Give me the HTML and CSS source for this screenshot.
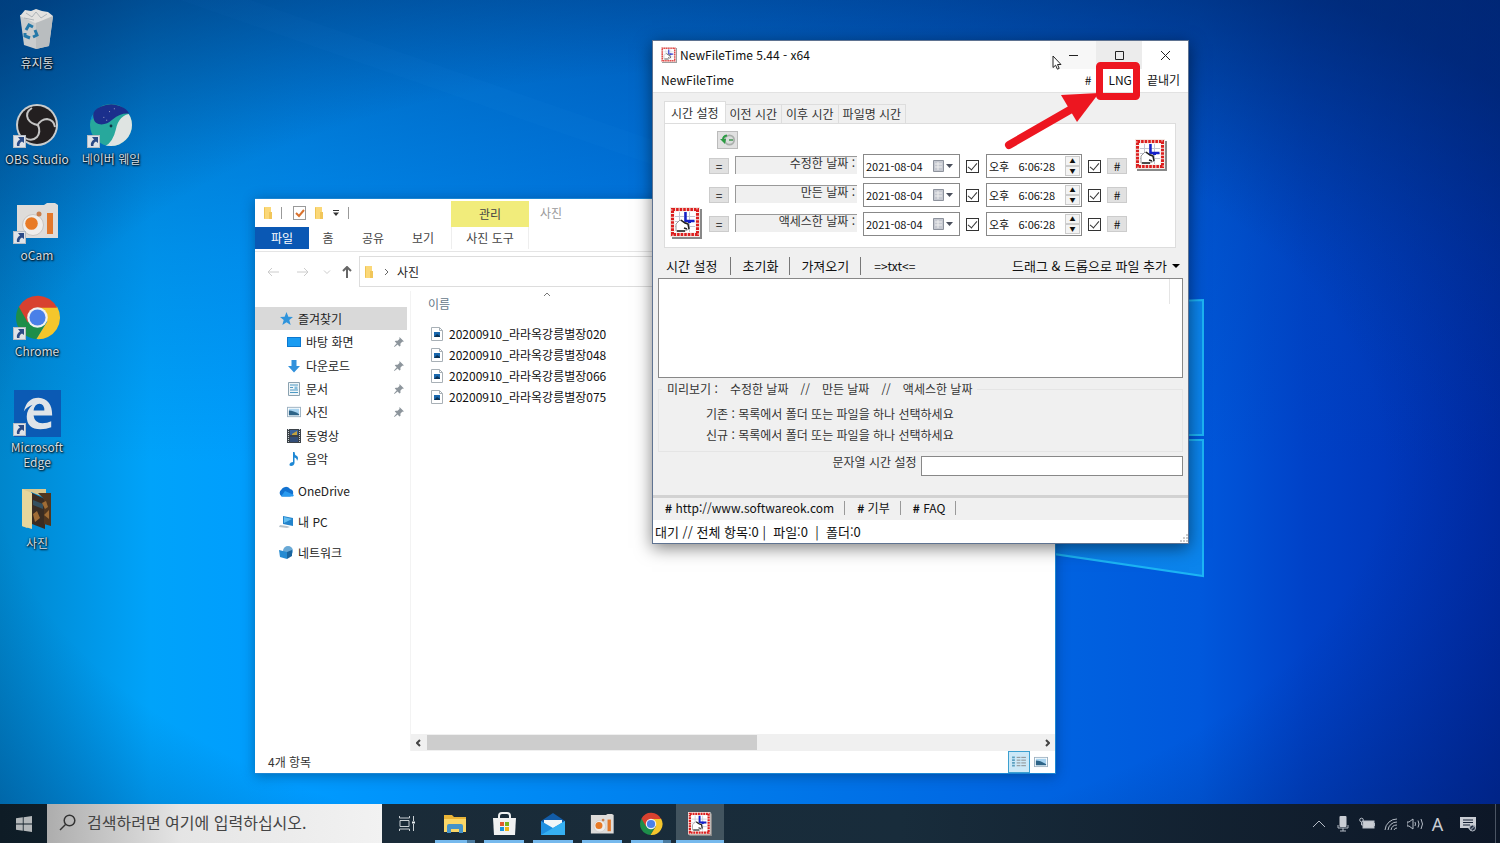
FILE: index.html
```html
<!DOCTYPE html>
<html lang="ko">
<head>
<meta charset="utf-8">
<title>NewFileTime</title>
<link rel="stylesheet" href="styles.css">
</head>
<body>
<svg class="defs" aria-hidden="true">
  <symbol id="nft" viewBox="0 0 32 32">
    <rect x="2" y="2" width="30" height="30" fill="#888"/>
    <rect width="30" height="30" fill="#f4e9e4"/>
    <rect x="2.500" y="2.500" width="25" height="25" fill="none" stroke="#dc1e1e" stroke-width="3" stroke-dasharray="2.600 .97"/>
    <rect x="4.500" y="4.500" width="21" height="21" fill="#fff"/>
    <path d="M9.500 5v20M14.500 5v20M19.500 5v20M5 9.500h20M5 14.500h20M5 19.500h20" stroke="#c3c6d2"/>
    <path d="M15.500 5v9h9" stroke="#1420c8" stroke-width="2.500" fill="none"/><path d="M18 13h3v3h-3z" fill="#1420c8"/>
    <path d="M6 17l4-4 3 2 5 1 1 6-4 2H6z" fill="#fff" stroke="#999"/>
    <path d="M11 13l4 3 3 1 1 5M7 24h8M14 21l3 1" fill="none" stroke="#222" stroke-width="1.500"/>
  </symbol>
  <symbol id="chrome" viewBox="0 0 48 48">
    <path d="M5 13A22 22 0 0 0 23 46l10-17L14 24z" fill="#1d8e4a"/>
    <path d="M24 13h20a22 22 0 0 1-21 33l11-18z" fill="#f4c62c"/>
    <path d="M5 13A22 22 0 0 1 44 14H24L14 29z" fill="#d8412f"/>
    <circle cx="24" cy="24" r="10.500" fill="#f0f0f0"/><circle cx="24" cy="24" r="8.200" fill="#4a80e8"/>
  </symbol>
  <symbol id="ocam" viewBox="0 0 42 36">
    <path d="M1 2h27l3-2h8l3 2v33H1z" fill="#dedcda"/>
    <circle cx="17" cy="22" r="10.500" fill="#efedeb" stroke="#c9c6c4"/><circle cx="15.500" cy="20.500" r="6.300" fill="#e87a26"/><circle cx="23" cy="11" r="2.500" fill="#c97e4c"/>
    <rect x="31" y="10" width="6" height="21" fill="#e2782c"/>
  </symbol>
  <symbol id="short" viewBox="0 0 13 13">
    <rect x=".5" y=".5" width="12" height="12" fill="#dfe3e8" stroke="#b5bcc4"/>
    <path d="M5 2h6v6L9 6.500Q6 8 6.500 11L4 11Q3 7 7 4.500z" fill="#2b4a86"/>
  </symbol>
  <symbol id="folder" viewBox="0 0 10 14">
    <path d="M1 1h7v5h1v7H1z" fill="#fbd878"/><path d="M1 1l1 1v11l-1-1z" fill="#efc453"/><path d="M6 6h3v7H6z" fill="#f1c65a"/>
  </symbol>
  <symbol id="photo" viewBox="0 0 12 14">
    <path d="M.5.500h8l3 3v10H.5z" fill="#fff" stroke="#a8b0b6"/><path d="M8.500.500v3h3" fill="none" stroke="#a8b0b6"/>
    <rect x="3" y="5" width="6" height="5" fill="#1a68ae"/><path d="M3 10l3-3 3 2v1z" fill="#0c3458"/>
  </symbol>
  <symbol id="pin" viewBox="0 0 11 11">
    <path d="M6 0l5 5-2 .3-2 2 .2 2.200-1.200 1L4 8.300.500 11 0 10.500 3 7 .800 5l1-1 2.200.2 2-2z" fill="#8d959c"/>
  </symbol>
  <symbol id="pic" viewBox="0 0 15 11">
    <rect x=".5" y=".5" width="14" height="10" fill="#fff" stroke="#9ab0c0"/><rect x="2" y="2" width="11" height="7" fill="#a9d4f0"/><path d="M2 4q5 0 11 4v1H2z" fill="#2e6487"/>
  </symbol>
</svg>

<div class="desktop">
  <svg class="wallpaper" viewBox="0 0 1500 843" preserveAspectRatio="none" aria-hidden="true">
    <defs>
      <linearGradient id="base"><stop offset="0" stop-color="#0086cc"/><stop offset=".1" stop-color="#00a3fa"/><stop offset=".2" stop-color="#009bff"/><stop offset=".5" stop-color="#0079ea"/><stop offset=".8" stop-color="#0058dc"/><stop offset=".87" stop-color="#0042c8"/><stop offset="1" stop-color="#002cac"/></linearGradient>
      <linearGradient id="top" x2="0" y2="1"><stop offset="0" stop-color="#003a80" stop-opacity=".5"/><stop offset=".3" stop-color="#0046a0" stop-opacity=".2"/><stop offset=".55" stop-color="#0046a0" stop-opacity="0"/></linearGradient>
      <radialGradient id="vig" cx=".46" cy=".55" r=".7"><stop offset=".66" stop-color="#001850" stop-opacity="0"/><stop offset="1" stop-color="#001850" stop-opacity=".45"/></radialGradient>
      <linearGradient id="pane"><stop offset="0" stop-color="#0a7ce8"/><stop offset="1" stop-color="#0b84ec"/></linearGradient>
    </defs>
    <rect width="1500" height="843" fill="url(#base)"/>
    <rect width="1500" height="843" fill="url(#top)"/>
    <path d="M250 0L653 140v25L180 0z" fill="#1b8ee8" opacity=".08"/>
    <path d="M1000 308l203-8v135h-203zM1000 440h203v136l-203-30z" fill="url(#pane)" stroke="#1cb4f4" stroke-width="2"/>
    <rect width="1500" height="843" fill="url(#vig)"/>
  </svg>

  <nav class="icons" aria-label="바탕 화면">
    <a class="icon" href="#bin">
      <svg class="pict" viewBox="0 0 42 42"><path d="M4 7l33 1-4 30-13 3-12-4z" fill="#c9cccd"/><path d="M4 8l5-6 6 1 5-2 6 2 6 1 5 4-6 4-12 3z" fill="#e2e1df"/><path d="M20 15l17-7-4 30-13 3z" fill="#b9bdbf"/><path d="M10 5l6 4 4-5 5 6 6-4M8 10l10 2" stroke="#aeb4b8" fill="none"/><g fill="none" stroke="#2478a8" stroke-width="3"><path d="M10 22l3-5 4 2"/><path d="M19 22l2 5-4 2"/><path d="M14 30l-5-2 0-3"/></g></svg>
      <span>휴지통</span></a>
    <span class="icon"></span>
    <a class="icon" href="#obs">
      <svg class="pict" viewBox="0 0 42 42"><circle cx="21" cy="21" r="21" fill="#c9cdce"/><circle cx="21" cy="21" r="19" fill="#231f20"/><g fill="none" stroke="#c4c4c4" stroke-width="2"><path d="M16 4q-7 4-4 11 3 5 10 6"/><path d="M21 22q4-7 10-7 7 1 8 8"/><path d="M22 21q3 7-1 12-5 5-12 1"/></g></svg>
      <svg class="short"><use href="#short"/></svg><span>OBS Studio</span></a>
    <a class="icon" href="#whale">
      <svg class="pict" viewBox="0 0 44 44"><defs><clipPath id="wc"><circle cx="22" cy="22" r="22"/></clipPath></defs><g clip-path="url(#wc)"><rect width="44" height="44" fill="#27a89c"/><path d="M16 44q8-4 11-17 3-16 17-17v34z" fill="#dfe4e2"/><path d="M0 0h12Q1 6 3 15L0 18z" fill="#0789d5"/></g><path d="M4 16Q1 7 11 3q10-5 20-1 8 3 10 8-9-1-17 6-8 7-15 5-4-1-5-5z" fill="#1b2f8c"/><circle cx="22" cy="23" r="1.500" fill="#134"/><path d="M14 14h1M20 8h1M25 5h1M17 17h1" stroke="#aac"/></svg>
      <svg class="short"><use href="#short"/></svg><span>네이버 웨일</span></a>
    <a class="icon" href="#ocam-app"><svg class="pict"><use href="#ocam"/></svg><svg class="short"><use href="#short"/></svg><span>oCam</span></a>
    <span class="icon"></span>
    <a class="icon" href="#chrome-app"><svg class="pict wide"><use href="#chrome"/></svg><svg class="short"><use href="#short"/></svg><span>Chrome</span></a>
    <span class="icon"></span>
    <a class="icon" href="#edge">
      <svg class="pict wide" viewBox="0 0 48 48"><rect width="48" height="48" fill="#0b5ab4"/><path d="M10 22Q13 8 25 8q14 1 14 18H20q1 8 9 8 5 0 9-2v6q-5 2-11 2-14 0-14-13 0-7 6-12-6 2-9 7zM20 21h11q0-7-5-7t-6 7z" fill="#dfe4e8"/></svg>
      <svg class="short"><use href="#short"/></svg><span>Microsoft Edge</span></a>
    <span class="icon"></span>
    <a class="icon" href="#photos">
      <svg class="pict" viewBox="0 0 42 42"><path d="M6 1h24v9l-15-6v32l-4 4-5-2z" fill="#d9c88f"/><path d="M6 1l10 4v36L6 38z" fill="#e6d69c"/><path d="M16 5l13 6v30l-13-5z" fill="#3a2c22"/><path d="M22 5h13v33l-7-2V11z" fill="#50361f"/><path d="M17 12l10 4v5l-10-4z" fill="#345060"/><path d="M17 26l4-3 3 7-5 4zM26 15l4-2 2 6-3 2zM28 27l5-5v9z" fill="#a06c35"/></svg>
      <span>사진</span></a>
  </nav>

  <section class="win explorer" aria-label="사진">
    <header class="qat">
      <svg class="f"><use href="#folder"/></svg><i class="bar"></i>
      <svg class="chk" viewBox="0 0 13 14"><rect x=".5" y=".5" width="12" height="13" fill="#fff" stroke="#999"/><path d="M3 7l3 3 5-6" stroke="#d9722e" stroke-width="2" fill="none"/></svg>
      <svg class="f"><use href="#folder"/></svg>
      <svg class="dd" viewBox="0 0 6 6"><path d="M0 .500h6" stroke="#333"/><path d="M0 2.500h6L3 6z" fill="#333"/></svg><i class="bar"></i>
      <button class="manage">관리</button><span class="wtitle">사진</span>
    </header>
    <div class="ribbon"><button class="file">파일</button><button>홈</button><button>공유</button><button>보기</button><button class="tools">사진 도구</button></div>
    <div class="addr">
      <button class="dim" aria-label="뒤로"><svg viewBox="0 0 12 10"><path d="M5 1L1 5l4 4M1 5h11"/></svg></button>
      <button class="dim" aria-label="앞으로"><svg viewBox="0 0 12 10"><path d="M7 1l4 4-4 4M0 5h11"/></svg></button>
      <button class="dim small" aria-label="최근 위치"><svg viewBox="0 0 12 10"><path d="M3 3.500l3 3 3-3"/></svg></button>
      <button class="up" aria-label="위로"><svg viewBox="0 0 10 12"><path d="M1 5l4-4 4 4M5 1v11"/></svg></button>
      <div class="path"><svg class="f"><use href="#folder"/></svg><svg class="gt" viewBox="0 0 5 8"><path d="M1 1l3 3-3 3"/></svg><span>사진</span></div>
    </div>
    <div class="content">
      <nav class="tree">
        <ul>
          <li class="sel"><a href="#q"><svg viewBox="0 0 14 14"><path d="M7 0l2 5 5 .3-4 3.400 1.500 5.300L7 11l-4.500 3L4 8.700 0 5.300 5 5z" fill="#2f94dc"/></svg>즐겨찾기</a></li>
          <li class="sub"><a href="#d"><svg viewBox="0 0 14 14"><rect y="2" width="14" height="10" fill="#0c78cf"/><rect x="1" y="3" width="12" height="8" fill="#1a9cf2"/></svg>바탕 화면</a><svg class="pin"><use href="#pin"/></svg></li>
          <li class="sub"><a href="#dl"><svg viewBox="0 0 14 14"><path d="M4.500 1h5v6H13l-6 6.500L1 7h3.500z" fill="#3191dc"/></svg>다운로드</a><svg class="pin"><use href="#pin"/></svg></li>
          <li class="sub"><a href="#doc"><svg viewBox="0 0 14 14"><path d="M1.500.500h11v13h-11z" fill="#eff5f8" stroke="#8ba2b0"/><path d="M3 3h8M3 5.500h3M3 8h8M3 10.500h8" stroke="#4e9ac4"/><path d="M7.500 4.500h3v3h-3z" fill="#83bcdc"/></svg>문서</a><svg class="pin"><use href="#pin"/></svg></li>
          <li class="sub"><a href="#p"><svg><use href="#pic"/></svg>사진</a><svg class="pin"><use href="#pin"/></svg></li>
          <li class="sub"><a href="#v"><svg viewBox="0 0 14 14"><rect width="14" height="14" fill="#3c4248"/><path d="M1.500 0v14M12.500 0v14" stroke="#c9d0d4" stroke-dasharray="1 1"/><path d="M3 1h8v5H3z" fill="#39629b"/><path d="M5 5l5-3v4H5z" fill="#c5a33d"/><path d="M3 8h8v5H3z" fill="#324e79"/></svg>동영상</a></li>
          <li class="sub"><a href="#m"><svg viewBox="0 0 14 14"><path d="M6 0h1.500q0 3 2.500 4 2 2 0 5 0-3-2.500-3.500V11q-.5 3-3.500 3-2 0-1.500-2 1-2 3.500-2z" fill="#1d87d4"/></svg>음악</a></li>
        </ul>
        <ul class="roots">
          <li><a href="#od"><svg class="big" viewBox="0 0 16 12"><path d="M4 11.500a4 4 0 0 1-.5-7A5 5 0 0 1 12 4a3.800 3.800 0 0 1 0 7.500z" fill="#1272d0"/><path d="M3 11.500L7 6l9 4-1 1.500z" fill="#2a9bf0"/></svg>OneDrive</a></li>
          <li><a href="#pc"><svg class="big" viewBox="0 0 16 14"><path d="M5 1l10 2v8L5 9z" fill="#2383cb"/><path d="M6 2l8 2-8 4z" fill="#62bdf0"/><path d="M2 10l7 1 3 1-3 1-8-1z" fill="#b7c2ca"/></svg>내 PC</a></li>
          <li><a href="#n"><svg class="big" viewBox="0 0 16 14"><circle cx="10" cy="5" r="5" fill="#69a9d6"/><path d="M1 4l8 2v7L2 11z" fill="#268bd2"/><path d="M9 6l5-2v6l-5 3z" fill="#1a659f"/></svg>네트워크</a></li>
        </ul>
      </nav>
      <div class="files">
        <div class="fhead"><button>이름</button><svg class="sort" viewBox="0 0 8 5"><path d="M1 4l3-3 3 3" fill="none" stroke="#777"/></svg></div>
        <ul>
          <li><svg><use href="#photo"/></svg>20200910_라라옥강릉별장020</li>
          <li><svg><use href="#photo"/></svg>20200910_라라옥강릉별장048</li>
          <li><svg><use href="#photo"/></svg>20200910_라라옥강릉별장066</li>
          <li><svg><use href="#photo"/></svg>20200910_라라옥강릉별장075</li>
        </ul>
        <div class="hscroll"><svg viewBox="0 0 5 8"><path d="M4 1L1 4l3 3"/></svg><div class="track"><div class="thumb"></div></div><svg viewBox="0 0 5 8"><path d="M1 1l3 3-3 3"/></svg></div>
      </div>
    </div>
    <footer class="estatus"><span>4개 항목</span>
      <button class="on" aria-label="자세히"><svg viewBox="0 0 15 13"><path d="M0 1.500h3M0 4.500h3M0 7.500h3M0 10.500h3" stroke="#5b9fbf" stroke-width="2"/><path d="M5 1.500h4M5 4.500h4M5 7.500h4M5 10.500h4M10 1.500h5M10 4.500h5M10 7.500h5M10 10.500h5" stroke="#888"/></svg></button>
      <button aria-label="큰 아이콘"><svg viewBox="0 0 15 11"><use href="#pic"/></svg></button></footer>
  </section>

  <section class="win app" aria-label="NewFileTime">
    <header class="title"><svg class="logo"><use href="#nft"/></svg><h1>NewFileTime 5.44 - x64</h1>
      <button class="min" aria-label="최소화"><svg viewBox="0 0 11 11"><path d="M1 5.500h9"/></svg></button>
      <button class="max" aria-label="최대화"><svg viewBox="0 0 11 11"><path d="M1.500 1.500h8v8h-8z"/></svg></button>
      <button aria-label="닫기"><svg viewBox="0 0 11 11"><path d="M1 1l9 9M10 1l-9 9"/></svg></button>
    </header>
    <nav class="menu"><button>NewFileTime</button><button class="hash">#</button><button>LNG</button><button>끝내기</button></nav>
    <div class="body">
      <div class="tabs" role="tablist"><button class="active" role="tab">시간 설정</button><button role="tab">이전 시간</button><button role="tab">이후 시간</button><button role="tab">파일명 시간</button></div>
      <div class="panel">
        <svg class="logo left"><use href="#nft"/></svg>
        <div class="form">
          <button class="now" aria-label="현재 시간"><svg viewBox="0 0 16 12"><circle cx="9.500" cy="6" r="5.500" fill="#a9aeab"/><circle cx="9.500" cy="6" r="3.800" fill="#d8dcda"/><path d="M7 1.500Q3 2 3 6" stroke="#2b9c43" stroke-width="2" fill="none"/><path d="M0 5h6l-1 5z" fill="#2b9c43"/><path d="M9 6h4" stroke="#6aa874" stroke-width="2"/></svg></button>
          <div class="row"><button class="sq">=</button><label for="d1">수정한 날짜 :</label><div class="date"><input id="d1" value="2021-08-04"><svg viewBox="0 0 21 13"><path d="M.5.500h10v11h-10z" fill="#c5c8d0" stroke="#8d929c"/><path d="M2 4h7M2 7h7M5 2v8" stroke="#eee"/><path d="M13 4h7l-3.500 4z" fill="#4a4f5c"/></svg></div><input class="cb" type="checkbox" checked aria-label="날짜"><div class="time"><input value="오후   6:06:28" aria-label="시간"><span class="spin"><button aria-label="위">▲</button><button aria-label="아래">▼</button></span></div><input class="cb" type="checkbox" checked aria-label="시간"><button class="sq">#</button></div>
          <div class="row"><button class="sq">=</button><label for="d2">만든 날짜 :</label><div class="date"><input id="d2" value="2021-08-04"><svg viewBox="0 0 21 13"><path d="M.5.500h10v11h-10z" fill="#c5c8d0" stroke="#8d929c"/><path d="M2 4h7M2 7h7M5 2v8" stroke="#eee"/><path d="M13 4h7l-3.500 4z" fill="#4a4f5c"/></svg></div><input class="cb" type="checkbox" checked aria-label="날짜"><div class="time"><input value="오후   6:06:28" aria-label="시간"><span class="spin"><button aria-label="위">▲</button><button aria-label="아래">▼</button></span></div><input class="cb" type="checkbox" checked aria-label="시간"><button class="sq">#</button></div>
          <div class="row"><button class="sq">=</button><label for="d3">액세스한 날짜 :</label><div class="date"><input id="d3" value="2021-08-04"><svg viewBox="0 0 21 13"><path d="M.5.500h10v11h-10z" fill="#c5c8d0" stroke="#8d929c"/><path d="M2 4h7M2 7h7M5 2v8" stroke="#eee"/><path d="M13 4h7l-3.500 4z" fill="#4a4f5c"/></svg></div><input class="cb" type="checkbox" checked aria-label="날짜"><div class="time"><input value="오후   6:06:28" aria-label="시간"><span class="spin"><button aria-label="위">▲</button><button aria-label="아래">▼</button></span></div><input class="cb" type="checkbox" checked aria-label="시간"><button class="sq">#</button></div>
        </div>
        <svg class="logo right"><use href="#nft"/></svg>
      </div>
      <div class="tools-row"><button>시간 설정</button><button>초기화</button><button>가져오기</button><button class="txt">=&gt;txt&lt;=</button><button class="drop">드래그 &amp; 드롭으로 파일 추가<svg viewBox="0 0 8 4"><path d="M0 0h8L4 4z"/></svg></button></div>
      <div class="list"><i></i></div>
      <fieldset>
        <legend><span>미리보기 :</span><span>수정한 날짜</span><span>//</span><span>만든 날짜</span><span>//</span><span>액세스한 날짜</span></legend>
        <p>기존 : 목록에서 폴더 또는 파일을 하나 선택하세요</p>
        <p>신규 : 목록에서 폴더 또는 파일을 하나 선택하세요</p>
      </fieldset>
      <div class="string"><label for="str">문자열 시간 설정</label><input id="str"></div>
    </div>
    <nav class="links"><a href="#site"><b>#</b> http://www.softwareok.com</a><a href="#donate"><b>#</b> 기부</a><a href="#faq"><b>#</b> FAQ</a></nav>
    <footer class="astatus"><span>대기 // 전체 항목:0 |&nbsp; 파일:0 &nbsp;|&nbsp; 폴더:0</span><svg viewBox="0 0 9 9"><path d="M7 1h2M7 4h2M4 4h2M7 7h2M4 7h2M1 7h2" stroke="#ccc" stroke-width="2"/></svg></footer>
    <svg class="callout" viewBox="0 0 140 92" aria-hidden="true"><rect x="96.500" y="6.500" width="37" height="31" rx="1" fill="none" stroke="#ed1620" stroke-width="7"/><path d="M6 86L72 48" stroke="#ed1620" stroke-width="8" stroke-linecap="round"/><path d="M96 34L58 36l16 27z" fill="#ed1620"/></svg>
    <svg class="cursor" viewBox="0 0 10 15" aria-hidden="true"><path d="M1 1v11.500l2.600-2.300 1.800 4 1.800-.8L5.500 9.500H9z" fill="#fff" stroke="#222"/></svg>
  </section>
</div>

<footer class="taskbar">
  <button class="start" aria-label="시작"><svg viewBox="0 0 16 16"><path d="M0 2.300L6.800 1.300v6.300H0zM7.600 1.200L16 0v7.600H7.600zM0 8.400h6.800v6.300L0 13.700zM7.600 8.400H16V16l-8.400-1.200z" fill="#b4b8ba"/></svg></button>
  <label class="search"><svg viewBox="0 0 17 17"><circle cx="10.500" cy="6.500" r="5.300"/><path d="M6.500 10.500L1 16"/></svg><input placeholder="검색하려면 여기에 입력하십시오." aria-label="검색"></label>
  <button class="tv" aria-label="작업 보기"><svg viewBox="0 0 17 15"><path d="M2 4.500h9v6H2zM1.500 0v2h10V0M1.500 15v-2h10v2M15.500 0v5M15.500 8v7" fill="none" stroke="#c9d0d4"/><path d="M14 5.500h3v2h-3z" fill="#e8eef0"/></svg></button>
  <button class="t run multi" aria-label="파일 탐색기"><svg viewBox="0 0 24 24"><path d="M1 3h8l2 2h12v5H1z" fill="#e9b437"/><path d="M1 7h22v13H1z" fill="#fbd767"/><path d="M4 21v-7q0-2 2-2h12q2 0 2 2v7h-4v-4H8v4z" fill="#4593c9"/></svg></button>
  <button class="t run" aria-label="스토어"><svg viewBox="0 0 24 24"><path d="M7 7V4q0-3 3-3h5q3 0 3 3v3" fill="none" stroke="#eef0f1" stroke-width="2"/><path d="M1 6h23l-1 17H2z" fill="#f0f1f1"/><path d="M8 10h4v4H8z" fill="#e35a30"/><path d="M13 10h4v4h-4z" fill="#79b51c"/><path d="M8 15h4v4H8z" fill="#1894dc"/><path d="M13 15h4v4h-4z" fill="#efb515"/></svg></button>
  <button class="t run" aria-label="메일"><svg viewBox="0 0 24 24"><path d="M0 9L12 1l12 8v5H0z" fill="#125ca8"/><path d="M3 8h18v8H3z" fill="#f2f6f8"/><path d="M0 9l12 7 12-7v14H0z" fill="#1e8fe0"/><path d="M0 23l24-14v14z" fill="#36b0f2"/></svg></button>
  <button class="t run" aria-label="oCam"><svg class="oc"><use href="#ocam"/></svg></button>
  <button class="t run multi" aria-label="Chrome"><svg><use href="#chrome"/></svg></button>
  <button class="t run current" aria-label="NewFileTime"><svg><use href="#nft"/></svg></button>
  <div class="tray">
    <svg viewBox="0 0 16 16"><path d="M2 11l6-6 6 6"/></svg>
    <svg viewBox="0 0 16 16"><rect x="4.500" y="0" width="7" height="11" rx="1" fill="#c9cdd4" stroke="none"/><path d="M3 9v3h10V9M8 12v3M5 15h6"/></svg>
    <svg viewBox="0 0 16 16"><rect x="4" y="5" width="11" height="7" fill="#c9cdd4"/><path d="M16 7v3" stroke-width="2"/><circle cx="2.500" cy="4" r="1.800"/><path d="M2.500 6v3h2"/></svg>
    <svg viewBox="0 0 16 16"><path d="M2 14A12 12 0 0 1 14 3M5 14a9 9 0 0 1 9-8M8 14a6 6 0 0 1 6-5M11 14a3 3 0 0 1 3-2"/></svg>
    <svg viewBox="0 0 16 16"><path d="M0 6h2l4-3v10l-4-3H0zM8 6q1 2 0 4M11 4.500q2 3.500 0 7M14 3q3 5 0 10"/></svg>
    <span>A</span>
    <svg class="note" viewBox="0 0 16 16"><path d="M0 1h16v11h-5v3l-3-3H0z" fill="#c9cdd4" stroke="none"/><path d="M3 4h10M3 6.500h10M3 9h7" stroke="#131f33"/><circle cx="12.500" cy="12" r="3" fill="#263247"/><path d="M10.500 14l4-4"/></svg>
    <i></i>
  </div>
</footer>
</body>
</html>
```
FILE: styles.css
```css
* { box-sizing: border-box; }
body {
  margin: 0;
  height: 100vh;
  display: flex;
  flex-direction: column;
  overflow: hidden;
  font: 12px/16px "Noto Sans CJK KR", sans-serif;
  color: #222;
}
button, input { font: inherit; color: inherit; margin: 0; padding: 0; border: 0; background: none; }
button { white-space: nowrap; }
a { color: inherit; text-decoration: none; }
ul { list-style: none; margin: 0; padding: 0; }
svg { flex: none; }
.defs { position: absolute; width: 0; height: 0; }

/* desktop */
.desktop { position: relative; flex: 1; min-height: 0; }
.wallpaper { position: absolute; top: 0; left: 0; width: 100%; height: 100vh; }
.icons { position: absolute; top: 4px; left: 0; display: grid; grid-template-columns: 74px 74px; grid-auto-rows: 96px; }
.icon { position: relative; display: flex; flex-direction: column; align-items: center; padding-top: 4px; line-height: 15px; text-align: center; color: #d3dde4; text-shadow: 1px 1px 2px #000, 0 0 2px #000; }
.pict { width: 42px; height: 42px; margin-bottom: 5px; }
.pict.wide { width: 47px; height: 47px; margin: -2px 0 2px; }
.icon .short { position: absolute; left: 13px; top: 35px; width: 13px; height: 13px; }
.win { position: absolute; display: flex; flex-direction: column; background: #fff; }

/* explorer */
.explorer { left: 255px; top: 198px; width: 801px; height: 576px; border: 1px solid #1b86d3; border-left-width: 0; box-shadow: 0 2px 12px #00204066; }
.f { width: 10px; height: 14px; }
.qat { height: 28px; display: flex; align-items: center; padding-left: 8px; }
.bar { width: 1px; height: 12px; background: #999; margin: 0 11px 0 8px; }
.chk { width: 13px; height: 14px; margin-right: 8px; }
.dd { width: 6px; height: 6px; margin-left: 9px; }
.qat .dd + .bar { margin-left: 9px; margin-right: 102px; }
.manage { align-self: flex-end; width: 78px; height: 26px; background: #f1ec7b; color: #444; }
.wtitle { margin-left: 11px; color: #999; line-height: 14px; }
.ribbon { height: 25px; display: flex; border-bottom: 1px solid #e5e5e5; color: #444; }
.ribbon button { height: 22px; width: 48px; }
.ribbon .file { width: 54px; background: #0a58b4; color: #fff; margin-right: -5px; }
.ribbon button:nth-child(3) { width: 42px; }
.ribbon button:nth-child(4) { width: 58px; }
.ribbon .tools { width: 78px; border: solid #eee; border-width: 0 1px; margin-left: -1px; }
.addr { height: 39px; display: flex; align-items: center; padding-left: 12px; }
.addr button { width: 12px; height: 12px; margin-right: 18px; }
.addr button svg { width: 12px; height: 10px; display: block; }
.addr svg path { fill: none; stroke: #666; }
.addr .dim svg path { stroke: #ccc; }
.addr .small { margin: 0 9px 0 -6px; }
.addr .up { margin-right: 5px; }
.addr .up svg { width: 10px; height: 12px; }
.addr .up path { stroke-width: 2; }
.path { flex: 1; height: 31px; border: 1px solid #ddd; display: flex; align-items: center; padding-left: 4px; }
.path .gt { width: 5px; height: 8px; margin: 0 8px 0 10px; }
.content { flex: 1; display: flex; min-height: 0; }
.tree { width: 156px; padding-top: 16px; border-right: 1px solid #f3f3f3; }
.tree ul:first-child { height: 164px; width: 152px; display: flex; flex-direction: column; }
.tree li { flex: 1; display: flex; align-items: center; padding-left: 25px; }
.tree a { display: flex; align-items: center; gap: 5px; flex: 1; }
.tree a svg { width: 13px; height: 13px; }
.tree .sub { padding-left: 32px; }
.tree .sub a svg { width: 14px; height: 14px; }
.tree .sel { background: #d9d9d9; }
.tree .pin { width: 10px; height: 10px; margin-right: 3px; }
.roots { padding-top: 4px; }
.roots li { height: 31px; padding-left: 23px; }
.roots a { gap: 4px; }
.tree .roots .big { width: 16px; height: 14px; }
.files { flex: 1; display: flex; flex-direction: column; }
.fhead { position: relative; height: 32px; padding: 5px 17px; color: #66788a; }
.sort { position: absolute; left: 132px; top: 1px; width: 8px; height: 5px; }
.files ul { flex: 1; }
.files li { height: 21px; display: flex; align-items: center; gap: 6px; padding-left: 20px; color: #111; }
.files li svg { width: 12px; height: 14px; }
.hscroll { height: 17px; display: flex; align-items: center; gap: 6px; padding: 0 5px; background: #f0f0f0; }
.hscroll svg { width: 5px; height: 8px; }
.hscroll path { fill: none; stroke: #444; stroke-width: 2; }
.track { flex: 1; height: 15px; }
.thumb { width: 54%; height: 100%; background: #cdcdcd; }
.estatus { height: 22px; display: flex; align-items: center; padding: 0 3px 0 13px; }
.estatus span { flex: 1; color: #333; }
.estatus button { width: 22px; height: 22px; display: grid; place-items: center; }
.estatus svg { width: 14px; height: 12px; }
.estatus .on { background: #cce8f7; border: 1px solid #3ca0d0; }

/* NewFileTime */
.app { left: 652px; top: 40px; width: 537px; height: 504px; border: 1px solid #5f7391; box-shadow: 0 4px 16px #00000080; color: #111; }
.title { height: 28px; display: flex; align-items: center; padding-left: 8px; }
.title .logo { width: 16px; height: 16px; opacity: .8; }
.title h1 { flex: 1; margin: 0 0 0 3px; font-size: 12px; font-weight: 400; }
.title button { width: 46px; height: 28px; display: grid; place-items: center; }
.title button svg { width: 11px; height: 11px; }
.title path { fill: none; stroke: #222; }
.title .min { background: #f7f7f7; }
.title .max { background: #ececec; }
.menu { height: 24px; display: flex; padding: 0 8px 2px; gap: 15px; font-size: 13px; border-bottom: 1px solid #e2e2e2; }
.menu button:first-child { margin-right: auto; font-size: 12px; }
.menu .hash { font-size: 12px; margin-right: 2px; }
.menu .hash ~ button { font-size: 12px; }
.body { flex: 1; background: #f0f0f0; padding: 8px 5px 0; }
.tabs { display: flex; align-items: flex-end; padding-left: 6px; height: 22px; color: #333; }
.tabs button { height: 19px; padding: 0 4px; border: 1px solid #ddd; border-bottom: 0; line-height: 14px; }
.tabs .active { height: 22px; padding: 0 6px; background: #fff; }
.tabs button + button { margin-left: -1px; }
.panel { display: flex; margin: 0 7px 0 6px; height: 125px; padding: 7px 8px 8px 5px; border: 1px solid #ddd; background: #fff; }
.panel .logo { width: 32px; height: 32px; }
.panel .left { align-self: flex-end; margin-right: 7px; }
.panel .right { margin: 8px 0 0 auto; }
.form { width: 420px; }
.now { width: 21px; height: 18px; margin-left: 8px; display: grid; place-items: center; background: #e1e1e1; border: 1px solid #bbb; }
.now svg { width: 16px; height: 12px; }
.row { display: grid; grid-template-columns: 20px 122px 97px 13px 97px 13px 20px; column-gap: 6px; align-items: center; height: 24px; margin: 4px 0 5px; }
.now + .row { margin-top: 5px; }
.sq { height: 16px; line-height: 14px; background: #e1e1e1; border: 1px solid #ccc; }
.row label { height: 18px; line-height: 12px; background: #f0f0f0; border: solid #999; border-width: 1px 0 0 1px; text-align: right; padding-right: 2px; align-self: start; color: #333; margin-top: 2px; }
.date, .time { height: 24px; border: 1px solid #888; background: #fff; display: flex; align-items: center; }
.date input, .time input { width: 68px; padding-left: 2px; white-space: pre; font-size: 11px; }
.time input { width: 78px; }
.date svg { width: 21px; height: 13px; margin-left: 1px; }
.row .time { margin-left: 1px; }
.spin { display: grid; width: 15px; }
.spin button { height: 10px; font-size: 6px; line-height: 8px; border: 1px solid #ccc; background: #f4f4f4; }
.cb { appearance: none; width: 13px; height: 13px; border: 1px solid #333; background: #fff; display: grid; place-items: start center; }
.cb::after { content: ""; width: 4px; height: 8px; border: solid #333; border-width: 0 1px 1px 0; transform: rotate(40deg); }
.tools-row { display: flex; height: 30px; align-items: center; font-size: 13px; padding-top: 5px; }
.tools-row button { padding: 0 11px; line-height: 18px; border-left: 1px solid #777; }
.tools-row button:first-child { padding: 0 13px 0 8px; border: 0; }
.tools-row .txt { padding-left: 13px; font-size: 12px; }
.tools-row .drop { margin-left: auto; padding: 0 3px 0 0; border: 0; display: flex; align-items: center; gap: 5px; }
.drop svg { width: 8px; height: 4px; }
.list { height: 100px; background: #fff; border: 1px solid #888; display: flex; justify-content: flex-end; }
.list i { width: 1px; height: 25px; margin-right: 12px; background: #e5e5e5; }
fieldset { margin: 3px 0 0; height: 71px; padding: 9px 0 0 47px; border: 1px solid #e5e5e5; color: #333; }
legend { margin-left: -44px; padding: 0 5px; display: flex; gap: 12px; }
fieldset p { margin: 0 0 5px; line-height: 16px; }
.string { display: flex; justify-content: flex-end; gap: 4px; margin-top: 4px; color: #333; }
.string label { line-height: 12px; }
.string input { width: 50%; height: 20px; border: 1px solid #888; background: #fff; }
.links { height: 25px; display: flex; align-items: center; background: #f0f0f0; border-top: 3px solid #d2d2d2; padding: 0 0 2px 12px; }
.links a { line-height: 14px; border-right: 1px solid #999; padding-right: 10px; margin-right: 12px; }
.astatus { height: 23px; display: flex; align-items: center; justify-content: space-between; padding-left: 2px; font-size: 13px; }
.astatus svg { width: 9px; height: 9px; align-self: flex-end; }
.callout { position: absolute; left: 350px; top: 18px; width: 140px; height: 92px; }
.cursor { position: absolute; left: 399px; top: 14px; width: 10px; height: 15px; }

/* taskbar */
.taskbar { position: relative; height: 39px; display: flex; align-items: stretch; background: linear-gradient(90deg, #0e1c26, #1a2b38 25%, #182c3b 60%, #0d1727); }
.taskbar button { display: grid; place-items: center; }
.start { width: 47px; }
.start svg { width: 16px; height: 16px; }
.search { width: 335px; display: flex; align-items: center; gap: 11px; padding: 0 0 3px 12px; background: linear-gradient(90deg, #adadad, #e5e5e5 40%, #f2f2f2); }
.search svg { width: 17px; height: 17px; fill: none; stroke: #333; stroke-width: 1.5; }
.search input { flex: 1; min-width: 0; font-size: 16px; }
.search input::placeholder { color: #444; opacity: 1; }
.tv { width: 49px; }
.tv svg { width: 17px; height: 15px; }
.t { width: 48px; position: relative; margin-right: 1px; }
.t svg { width: 24px; height: 24px; }
.t .oc { height: 20px; }
.run::after { content: ""; position: absolute; bottom: 0; left: 4px; right: 4px; height: 3px; background: #76b9ed; }
.multi::after { border-right: 8px solid #4b7ba0; }
.current { background: #42545f; }
.current::after { left: 0; right: 0; }
.tray { margin-left: auto; display: flex; align-items: center; gap: 8px; padding-right: 4px; color: #c9cdd4; }
.tray svg { width: 16px; height: 16px; fill: none; stroke: #b5bcc6; }
.tray span { width: 13px; font: 18px/20px "Noto Sans", sans-serif; text-align: center; }
.tray .note { margin: 0 11px 0 8px; }
.tray i { width: 1px; height: 100%; background: #4b5563; }
```
